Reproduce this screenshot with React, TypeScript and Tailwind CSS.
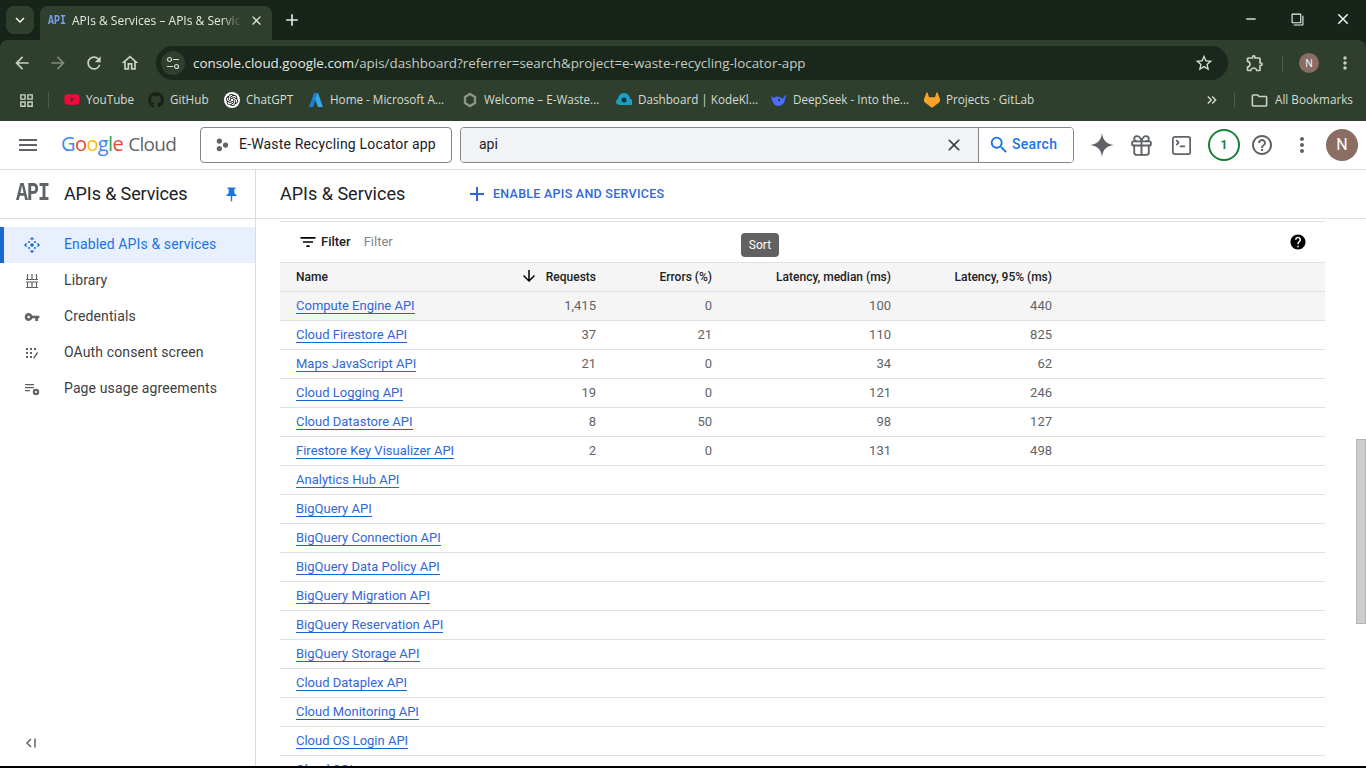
import React from "react";
import {
  MdAdd, MdArrowBack, MdArrowDownward, MdArrowForward, MdClose, MdFilterList, MdHelp, MdHelpOutline,
  MdKeyboardArrowDown, MdKeyboardDoubleArrowRight, MdMenu, MdMoreVert, MdOutlineExtension, MdOutlineFilterNone,
  MdOutlineFolder, MdOutlineGridView, MdOutlineHome, MdPushPin, MdRefresh, MdRemove, MdSearch, MdStarBorder, MdVpnKey,
} from "react-icons/md";
import { FaGithub, FaYoutube } from "react-icons/fa";
import { SiGitlab, SiOpenai } from "react-icons/si";
import { Gift, SquareTerminal } from "lucide-react";

const rows = [
  ["Compute Engine API", "1,415", "0", "100", "440"],
  ["Cloud Firestore API", "37", "21", "110", "825"],
  ["Maps JavaScript API", "21", "0", "34", "62"],
  ["Cloud Logging API", "19", "0", "121", "246"],
  ["Cloud Datastore API", "8", "50", "98", "127"],
  ["Firestore Key Visualizer API", "2", "0", "131", "498"],
  ["Analytics Hub API"],
  ["BigQuery API"],
  ["BigQuery Connection API"],
  ["BigQuery Data Policy API"],
  ["BigQuery Migration API"],
  ["BigQuery Reservation API"],
  ["BigQuery Storage API"],
  ["Cloud Dataplex API"],
  ["Cloud Monitoring API"],
  ["Cloud OS Login API"],
  ["Cloud SQL"],
];

function Bookmark({ icon, label, width }: { icon: React.ReactNode; label: string; width: string }) {
  return (
    <div className={`flex items-center gap-[6px] ${width}`}>
      <span className="flex h-4 w-4 shrink-0 items-center justify-center">{icon}</span>
      <span className="whitespace-nowrap text-[11.7px] text-[#d5dcd4]">{label}</span>
    </div>
  );
}

function ChromeBar() {
  return (
    <div className="h-[121px] shrink-0 bg-[#16241a] font-['Open_Sans',sans-serif]">
      <div className="flex h-[40px] items-end pl-[6px]">
        <div className="mb-[6px] flex h-[28px] w-[28px] items-center justify-center rounded-lg bg-[#2f3f2e] text-white">
          <MdKeyboardArrowDown size={18} />
        </div>
        <div className="ml-[6px] flex h-[34px] w-[232px] items-center rounded-t-lg bg-[#2f3f2e] pb-[5px] pl-2 pr-2">
          <span className="w-[24px] scale-y-125 font-['Liberation_Mono',monospace] text-[10px] font-bold text-[#7c9cf0]">API</span>
          <span className="w-[170px] overflow-hidden whitespace-nowrap text-[12px] text-[#e4e9e3] [mask-image:linear-gradient(to_right,black_88%,transparent)]">APIs &amp; Services – APIs &amp; Services</span>
          <MdClose size={15} className="ml-auto text-[#e4e9e3]" />
        </div>
        <MdAdd size={20} className="mb-[10px] ml-[10px] text-[#e4e9e3]" />
        <div className="mb-[12px] ml-auto flex items-center gap-[30px] pr-[14px] text-[#f2f4f2]">
          <MdRemove size={16} className="mr-[2px]" />
          <MdOutlineFilterNone size={13} className="-scale-x-100" />
          <MdClose size={18} />
        </div>
      </div>
      <div className="flex h-[40px] items-center rounded-t-lg bg-[#2f3f2e] pl-[12px] pt-[6px]">
        <MdArrowBack size={20} className="text-[#c9d2c8]" />
        <MdArrowForward size={20} className="ml-[16px] text-[#7e8a7d]" />
        <MdRefresh size={20} className="ml-[16px] text-[#c9d2c8]" />
        <MdOutlineHome size={20} className="ml-[16px] text-[#c9d2c8]" />
        <div className="ml-[16px] flex h-[34px] w-[1072px] items-center rounded-full bg-[#1a271c] pl-[5px] pr-[14px]">
          <span className="flex h-[24px] w-[24px] items-center justify-center rounded-full bg-[#2f3f2e] text-[#d5dcd4]">
            <svg viewBox="0 0 14 14" className="h-[14px] w-[14px]" fill="none" stroke="currentColor" strokeWidth="1.2"><circle cx="3.500" cy="3.500" r="2" /><path d="M7 3.500h6M1 10.500h6" /><circle cx="10.500" cy="10.500" r="2" /></svg>
          </span>
          <span className="ml-[8px] whitespace-nowrap text-[13.4px] text-[#e4e9e3]">
            console.cloud.google.com<span className="text-[#c4ccc3]">/apis/dashboard?referrer=search&amp;project=e-waste-recycling-locator-app</span>
          </span>
          <MdStarBorder size={20} className="ml-auto text-[#d5dcd4]" />
        </div>
        <MdOutlineExtension size={20} className="ml-[17px] text-[#c9d2c8]" />
        <div className="ml-[17px] h-[16px] w-px bg-[#4c5b4b]" />
        <div className="ml-[16px] flex h-[20px] w-[20px] items-center justify-center rounded-full bg-[#8a6e63] text-[10px] text-white">N</div>
        <MdMoreVert size={20} className="ml-[16px] text-[#c9d2c8]" />
      </div>
      <div className="flex h-[41px] items-center bg-[#2f3f2e] pb-px pl-[18px]">
        <MdOutlineGridView size={17} className="text-[#c9d2c8]" />
        <div className="ml-[13px] mr-[15px] h-[16px] w-px bg-[#4c5b4b]" />
        <Bookmark width="w-[84px]" label="YouTube" icon={<FaYoutube size={17} className="text-[#f4083a]" />} />
        <Bookmark width="w-[76px]" label="GitHub" icon={<FaGithub size={16} className="text-[#18201a]" />} />
        <Bookmark width="w-[84px]" label="ChatGPT" icon={<span className="flex h-4 w-4 items-center justify-center rounded-full bg-white"><SiOpenai size={12} className="text-black" /></span>} />
        <Bookmark width="w-[154px]" label="Home - Microsoft A..." icon={<svg viewBox="0 0 16 16" className="h-4 w-4"><path d="M6 1h4l-5 14H1z" fill="#1b7fd6" /><path d="M10 1l5 14h-5L7 7z" fill="#39a7ec" /></svg>} />
        <Bookmark width="w-[154px]" label="Welcome – E-Waste..." icon={<svg viewBox="0 0 16 16" className="h-4 w-4"><path d="M8 2l5 3v6l-5 3-5-3V5z" fill="none" stroke="#8a938a" strokeWidth="2.400" /></svg>} />
        <Bookmark width="w-[155px]" label="Dashboard | KodeKl..." icon={<svg viewBox="0 0 16 16" className="h-4 w-4"><path d="M1 12a3 3 0 0 1 1-5 6 6 0 0 1 12 0 3 3 0 0 1 0 6H3z" fill="#1c9fc4" /><circle cx="8" cy="8" r="2.500" fill="#16333c" /></svg>} />
        <Bookmark width="w-[153px]" label="DeepSeek - Into the..." icon={<svg viewBox="0 0 16 16" className="h-4 w-4"><path d="M0 4c1 1 2 1 3 2 2-2 5-2 7 0 1 1 2 1 3-1l1-2 1 1-1 3c0 4-3 7-7 7S1 9 0 4z" fill="#4d6bfe" /><circle cx="8" cy="8" r="1.200" fill="#2f3f2e" /></svg>} />
        <Bookmark width="w-[150px]" label="Projects · GitLab" icon={<SiGitlab size={16} className="text-[#fca326]" />} />
        <MdKeyboardDoubleArrowRight size={16} className="ml-[130px] text-[#d5dcd4]" />
        <div className="ml-[14px] mr-[15px] h-[16px] w-px bg-[#4c5b4b]" />
        <MdOutlineFolder size={19} className="text-[#c9d2c8]" />
        <span className="ml-[6px] whitespace-nowrap text-[11.7px] text-[#d5dcd4]">All Bookmarks</span>
      </div>
    </div>
  );
}

function TopNav() {
  return (
    <div className="flex h-[49px] shrink-0 items-center border-b border-[#dadce0] bg-white pl-[16px]">
      <MdMenu size={24} className="text-[#5f6368]" />
      <div className="ml-[21px] flex w-[120px] items-baseline whitespace-nowrap pb-[2px] font-['Open_Sans',sans-serif] text-[20px] tracking-[-0.6px]">
        <span className="text-[#4285f4]">G</span><span className="text-[#ea4335]">o</span><span className="text-[#fbbc04]">o</span><span className="text-[#4285f4]">g</span><span className="text-[#34a853]">l</span><span className="mr-[5px] text-[#ea4335]">e</span>
        <span className="text-[19px] tracking-[-0.7px] text-[#5f6368]">Cloud</span>
      </div>
      <div className="ml-[19px] flex h-[36px] w-[252px] items-center rounded border border-[#80868b] pl-[14px]">
        <svg viewBox="0 0 16 16" className="h-[14px] w-[14px] text-[#5f6368]" fill="currentColor"><circle cx="5" cy="3.500" r="3" /><circle cx="5" cy="12" r="3" /><circle cx="12" cy="8" r="3" /></svg>
        <span className="ml-[10px] whitespace-nowrap pb-[2px] text-[14px] tracking-[0.17px] text-[#202124]">E-Waste Recycling Locator app</span>
      </div>
      <div className="ml-[8px] flex h-[36px] w-[614px] overflow-hidden rounded border border-[#80868b]">
        <div className="flex flex-1 items-center bg-[#f1f3f4] pl-[18px] pr-[14px]">
          <span className="pb-[2px] text-[14px] text-[#202124]">api</span>
          <MdClose size={20} className="ml-auto text-[#3c4043]" />
        </div>
        <div className="flex w-[95px] items-center border-l border-[#80868b] bg-white pl-[9px] text-[#1a73e8]">
          <MdSearch size={22} />
          <span className="ml-[2px] pb-[2px] text-[14px] font-medium tracking-[0.3px]">Search</span>
        </div>
      </div>
      <svg viewBox="0 0 24 24" className="ml-[15px] h-[26px] w-[26px] text-[#5f6368]" fill="currentColor"><path d="M12 1c1 7 4 10 11 11-7 1-10 4-11 11-1-7-4-10-11-11 7-1 10-4 11-11z" /></svg>
      <Gift size={25} strokeWidth={1.8} className="ml-[14px] text-[#5f6368]" />
      <SquareTerminal size={23} strokeWidth={1.8} className="ml-[16px] text-[#5f6368]" />
      <div className="ml-[15px] flex h-[32px] w-[32px] items-center justify-center rounded-full border-2 border-[#188038] text-[12px] font-bold text-[#188038]">1</div>
      <MdHelpOutline size={24} className="ml-[10px] text-[#5f6368]" />
      <MdMoreVert size={24} className="ml-[16px] text-[#5f6368]" />
      <div className="ml-[12px] flex h-[32px] w-[32px] items-center justify-center rounded-full bg-[#8a6e63] text-[16px] text-white">N</div>
    </div>
  );
}

function NavItem({ icon, label, active }: { icon: React.ReactNode; label: string; active?: boolean }) {
  return (
    <div className={active ? "flex h-[36px] items-center border-l-4 border-[#1967d2] bg-[#e8f0fe] pl-[20px] text-[#1a73e8]" : "flex h-[36px] items-center pl-[24px] text-[#3c4043]"}>
      <span className="flex h-4 w-4 items-center justify-center">{icon}</span>
      <span className="ml-[24px] whitespace-nowrap pb-[2px] text-[14px] tracking-[0.12px]">{label}</span>
    </div>
  );
}

function Sidebar() {
  return (
    <div className="flex w-[256px] shrink-0 flex-col border-r border-[#dadce0] bg-white">
      <div className="flex h-[49px] shrink-0 items-center border-b border-[#dadce0] pl-[16px] pr-[15px]">
        <span className="w-[48px] scale-y-125 font-['Liberation_Mono',monospace] text-[20px] font-bold tracking-[-1px] text-[#5f6368]">API</span>
        <span className="pb-[2px] text-[18px] tracking-[-0.12px] text-[#202124]">APIs &amp; Services</span>
        <MdPushPin size={17} className="ml-auto text-[#1a73e8]" />
      </div>
      <div className="mt-[8px] flex flex-col">
        <NavItem active label="Enabled APIs & services" icon={
          <svg viewBox="0 0 16 16" className="h-4 w-4 text-[#1967d2]" fill="currentColor"><path d="M8 0l2.500 2.500h-5zM8 16l-2.500-2.500h5zM0 8l2.500-2.500v5zM16 8l-2.500 2.500v-5z" /><circle cx="8" cy="8" r="1.800" /><circle cx="5" cy="5" r="1" /><circle cx="11" cy="5" r="1" /><circle cx="5" cy="11" r="1" /><circle cx="11" cy="11" r="1" /></svg>
        } />
        <NavItem label="Library" icon={
          <svg viewBox="0 0 16 16" className="h-4 w-4" fill="none" stroke="#5f6368" strokeWidth="1.200"><path d="M3.500 1v5M8 1v5M12.500 1v5M2 6.500h12M2 9h12M3.500 9v5M8 9v5M12.500 9v5M2 14.500h12" /></svg>
        } />
        <NavItem label="Credentials" icon={<MdVpnKey size={20} className="text-[#5f6368]" />} />
        <NavItem label="OAuth consent screen" icon={
          <svg viewBox="0 0 16 16" className="h-4 w-4" fill="#5f6368"><path d="M2 3h2v2H2zM6 3h2v2H6zM10 3h2v2h-2zM2 7h2v2H2zM6 7h2v2H6zM2 11h2v2H2zM6 11h2v2H6z" /><path d="M9 13l4-6 1.200.8-4 6z" /></svg>
        } />
        <NavItem label="Page usage agreements" icon={
          <svg viewBox="0 0 16 16" className="h-4 w-4" fill="#5f6368"><path d="M1 3h9v1.200H1zM1 6h9v1.200H1zM1 9h5v1.200H1z" /><circle cx="12" cy="11" r="3.200" /><circle cx="12" cy="11" r="1.100" fill="#fff" /></svg>
        } />
      </div>
      <div className="mt-auto mb-[18px] pl-[24px] text-[#5f6368]">
        <svg viewBox="0 0 14 14" className="h-[14px] w-[14px]" fill="none" stroke="currentColor" strokeWidth="1.500"><path d="M7 3L3 7l4 4M11 2.500v9" /></svg>
      </div>
    </div>
  );
}

const gridCols = "grid grid-cols-[170px_130px_116px_179px_161px] items-center";

function ApiTable() {
  return (
    <div className="ml-[24px] mr-[41px] mt-[2px] flex-1 border-t border-[#e0e0e0] font-['Roboto',sans-serif]">
      <div className="flex h-[41px] items-center border-b border-[#e0e0e0] pb-px pl-[18px] pr-[18px] text-[13px]">
        <MdFilterList size={20} className="text-black" />
        <span className="ml-[3px] font-medium text-[#202124]">Filter</span>
        <span className="ml-[13px] text-[#80868b]">Filter</span>
        <MdHelp size={18} className="ml-auto text-black" />
      </div>
      <div className={`${gridCols} relative h-[29px] border-b border-[#e0e0e0] bg-[#f5f5f5] pl-[16px] text-[12px] font-medium text-[#202124]`}>
        <span>Name</span>
        <span className="text-right">Requests</span>
        <span className="text-right">Errors (%)</span>
        <span className="text-right">Latency, median (ms)</span>
        <span className="text-right">Latency, 95% (ms)</span>
        <MdArrowDownward size={18} className="absolute left-[240px] top-[4px] text-black" />
      </div>
      {rows.map((row, i) => (
        <div key={row[0]} className={`${gridCols} h-[29px] border-b border-[#e0e0e0] pl-[16px] text-[13px] text-[#5f6368] ${i === 0 ? "bg-[#f5f5f5]" : ""}`}>
          <span className="whitespace-nowrap"><a className="border-b border-[#1967d2] text-[#3367d6]">{row[0]}</a></span>
          <span className="text-right">{row[1]}</span>
          <span className="text-right">{row[2]}</span>
          <span className="text-right">{row[3]}</span>
          <span className="text-right">{row[4]}</span>
        </div>
      ))}
    </div>
  );
}

export default function App() {
  return (
    <div className="relative flex h-[768px] w-[1366px] flex-col overflow-hidden bg-white font-['Roboto',sans-serif]">
      <ChromeBar />
      <TopNav />
      <div className="flex min-h-0 flex-1">
        <Sidebar />
        <div className="flex min-w-0 flex-1 flex-col overflow-hidden">
          <div className="flex h-[49px] shrink-0 items-center border-b border-[#e0e0e0] pl-[24px]">
            <span className="w-[185px] pb-[2px] text-[18px] text-[#202124]">APIs &amp; Services</span>
            <MdAdd size={24} className="text-[#3367d6]" />
            <span className="ml-[4px] text-[12.5px] font-medium tracking-[0.27px] text-[#3367d6]">ENABLE APIS AND SERVICES</span>
          </div>
          <ApiTable />
        </div>
      </div>
      {/* tooltip + scrollbar sit over the page */}
      <div className="absolute left-[741px] top-[233px] flex h-[24px] w-[38px] items-center justify-center rounded bg-[#616161] text-[12px] text-white">Sort</div>
      <div className="absolute right-0 top-[439px] h-[185px] w-[10px] border border-[#b5b5b5] bg-[#cdcdcd]" />
      <div className="absolute bottom-0 left-0 h-[2px] w-full bg-black" />
    </div>
  );
}
